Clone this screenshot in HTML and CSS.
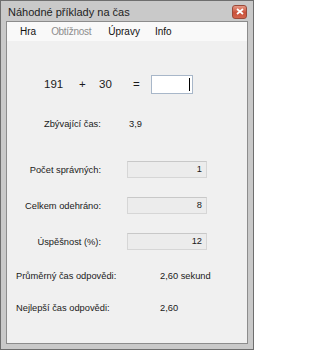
FILE: index.html
```html
<!DOCTYPE html>
<html lang="cs">
<head>
<meta charset="utf-8">
<title>Náhodné příklady na čas</title>
<link rel="stylesheet" href="styles.css">
</head>
<body>
<div class="window">
  <div class="titlebar">
    <span class="title">Náhodné příklady na čas</span>
    <span class="close"><svg width="8" height="7" viewBox="0 0 8 7"><path d="M1 1 L7 6 M7 1 L1 6" stroke="#fff" stroke-width="1.8"/></svg></span>
  </div>
  <div class="client">
    <div class="menubar">
      <span class="menu">Hra</span>
      <span class="menu disabled">Obtížnost</span>
      <span class="menu">Úpravy</span>
      <span class="menu">Info</span>
    </div>
    <div class="content">
      <div class="equation">
        <span>191</span>
        <span>+</span>
        <span>30</span>
        <span>=</span>
        <span class="answer"><span class="caret"></span></span>
      </div>
      <div class="timer">
        <span class="label">Zbývající čas:</span>
        <span class="label">3,9</span>
      </div>
      <div class="stats">
        <span class="label right">Počet správných:</span>
        <span class="readout">1</span>
        <span class="label right">Celkem odehráno:</span>
        <span class="readout">8</span>
        <span class="label right">Úspěšnost (%):</span>
        <span class="readout">12</span>
      </div>
      <div class="times">
        <span class="label">Průměrný čas odpovědi:</span>
        <span class="label">2,60 sekund</span>
        <span class="label">Nejlepší čas odpovědi:</span>
        <span class="label">2,60</span>
      </div>
    </div>
  </div>
</div>
</body>
</html>
```
FILE: styles.css
```css
html, body {
  margin: 0;
  padding: 0;
  background: #ffffff;
}
.window {
  width: 254px;
  height: 350px;
  box-sizing: border-box;
  border: 1px solid #6e6e6e;
  background: #c9c9c9;
  padding: 0 5px 5px 5px;
  display: flex;
  flex-direction: column;
  font-family: "Liberation Sans", Arial, sans-serif;
  color: #1a1a1a;
}
.titlebar {
  height: 20px;
  display: flex;
  align-items: center;
  justify-content: space-between;
  padding-left: 2px;
}
.title {
  font-size: 11px;
  color: #1e1e1e;
  margin-top: 1px;
}
.close {
  width: 15px;
  height: 14px;
  margin-right: 1px;
  margin-top: 1px;
  border: 1px solid #9a4a3a;
  border-radius: 3px;
  background: linear-gradient(#e79a86, #c8503a 55%, #d4654d);
  box-sizing: border-box;
  display: flex;
  align-items: center;
  justify-content: center;
}
.client {
  flex: 1;
  border: 1px solid #8c8c8c;
  background: #f0f0f0;
  display: flex;
  flex-direction: column;
}
.menubar {
  height: 19px;
  background: #f9f9f9;
  display: flex;
  align-items: center;
  font-size: 10px;
  padding-left: 13px;
}
.menu {
  margin-right: 15px;
  color: #111;
}
.menu.disabled {
  color: #8d8d8d;
  letter-spacing: -0.3px;
  margin-right: 17px;
}
.content {
  display: flex;
  flex-direction: column;
  padding-left: 8px;
}
.equation {
  display: grid;
  grid-template-columns: 35px 20px 34px 18px 42px;
  align-items: center;
  margin-top: 33px;
  margin-left: 29px;
  font-size: 11.5px;
  height: 20px;
}
.answer {
  height: 19px;
  box-sizing: border-box;
  border: 1px solid #a8b7c9;
  background: #ffffff;
  display: flex;
  justify-content: flex-end;
  align-items: center;
  padding-right: 2px;
}
.caret {
  width: 1px;
  height: 13px;
  background: #000;
}
.label {
  font-size: 9.3px;
  color: #1a1a1a;
  white-space: nowrap;
}
.right {
  text-align: right;
}
.timer {
  display: grid;
  grid-template-columns: 85px auto;
  margin-top: 23px;
  margin-left: 29px;
  height: 14px;
  align-items: center;
}
.stats {
  display: grid;
  grid-template-columns: 86px 80px;
  column-gap: 26px;
  row-gap: 19px;
  align-items: center;
  margin-top: 30px;
}
.readout {
  height: 17px;
  box-sizing: border-box;
  border: 1px solid #d6d6d6;
  border-top-color: #c8c8c8;
  background: #ececec;
  font-size: 9.3px;
  text-align: right;
  padding-right: 4px;
  line-height: 15px;
}
.times {
  display: grid;
  grid-template-columns: 144px auto;
  row-gap: 18px;
  margin-top: 19px;
  margin-left: 1px;
  align-items: center;
}
.times .label {
  height: 14px;
  line-height: 14px;
}
```
